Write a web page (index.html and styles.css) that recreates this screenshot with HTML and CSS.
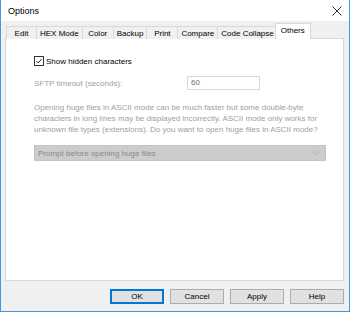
FILE: index.html
```html
<!DOCTYPE html>
<html>
<head>
<meta charset="utf-8">
<link rel="stylesheet" href="styles.css">
</head>
<body>
<div class="window">
  <div class="titlebar">
    <span class="title">Options</span>
    <svg class="close" width="10" height="10" viewBox="0 0 10 10"><path d="M0.5 0.5 L9.5 9.5 M9.5 0.5 L0.5 9.5" stroke="#333" stroke-width="1" fill="none"/></svg>
  </div>
  <div class="content">
    <div class="tabs">
      <div class="tab">Edit</div>
      <div class="tab">HEX Mode</div>
      <div class="tab">Color</div>
      <div class="tab">Backup</div>
      <div class="tab">Print</div>
      <div class="tab">Compare</div>
      <div class="tab">Code Collapse</div>
      <div class="tab active">Others</div>
    </div>
    <div class="panel">
      <label class="check-row">
        <span class="checkbox"><svg width="10" height="10" viewBox="0 0 10 10"><path d="M1.8 5.2 L4 7.4 L8.4 2.4" stroke="#222" stroke-width="1.2" fill="none"/></svg></span>
        <span>Show hidden characters</span>
      </label>
      <div class="field-row">
        <span class="disabled">SFTP timeout (seconds):</span>
        <span class="input">60</span>
      </div>
      <p class="note">Opening huge files in ASCII mode can be much faster but some double-byte characters in long lines may be displayed incorrectly. ASCII mode only works for unknown file types (extensions). Do you want to open huge files in ASCII mode?</p>
      <div class="select">
        <span>Prompt before opening huge files</span>
        <svg width="8" height="5" viewBox="0 0 8 5"><path d="M0.5 0.5 L4 4 L7.5 0.5" stroke="#b0b0b0" stroke-width="1" fill="none"/></svg>
      </div>
    </div>
    <div class="buttons">
      <button class="btn default">OK</button>
      <button class="btn">Cancel</button>
      <button class="btn">Apply</button>
      <button class="btn">Help</button>
    </div>
  </div>
</div>
</body>
</html>
```
FILE: styles.css
```css
html, body {
  margin: 0;
  padding: 0;
}
body {
  width: 350px;
  height: 312px;
  font-family: "Liberation Sans", Arial, sans-serif;
  font-size: 8px;
  color: #000;
}
.window {
  box-sizing: border-box;
  width: 350px;
  height: 312px;
  border: 1px solid #3f9ae6;
  border-top: none;
  background: #f0f0f0;
  display: flex;
  flex-direction: column;
}
.titlebar {
  height: 21px;
  background: #fff;
  display: flex;
  align-items: center;
  justify-content: space-between;
  padding: 0 7px 0 7px;
  flex: none;
}
.title {
  font-size: 9px;
  color: #000;
}
.close {
  display: block;
}
.content {
  flex: 1;
  display: flex;
  flex-direction: column;
  padding: 0 5px 0 4px;
}
.tabs {
  display: flex;
  height: 18px;
  align-items: flex-end;
  padding-left: 1px;
  margin-bottom: -1px;
  position: relative;
  z-index: 1;
}
.tab {
  box-sizing: border-box;
  min-width: 31px;
  height: 13px;
  line-height: 13px;
  padding: 0 3px;
  text-align: center;
  border: 1px solid #d9d9d9;
  border-bottom: none;
  border-left: none;
  background: #f0f0f0;
  color: #000;
}
.tab:first-child {
  border-left: 1px solid #d9d9d9;
}
.tab.active {
  height: 16px;
  line-height: 14px;
  background: #fff;
  margin-left: -3px;
  min-width: 35px;
  border-left: 1px solid #d9d9d9;
  padding: 0 5px;
}
.panel {
  height: 243px;
  box-sizing: border-box;
  background: #fff;
  border: 1px solid #d9d9d9;
  padding: 16px 17px 0 28px;
}
.check-row {
  display: flex;
  align-items: center;
  gap: 2px;
  height: 12px;
}
.checkbox {
  box-sizing: border-box;
  width: 10px;
  height: 10px;
  border: 1px solid #333;
  background: #fff;
  display: flex;
  align-items: center;
  justify-content: center;
}
.checkbox svg {
  display: block;
}
.disabled {
  color: #a0a0a0;
}
.field-row {
  display: flex;
  align-items: center;
  margin-top: 9px;
  height: 14px;
}
.field-row .disabled {
  width: 153px;
}
.input {
  box-sizing: border-box;
  width: 73px;
  height: 14px;
  border: 1px solid #d9d9d9;
  background: #fff;
  color: #6d6d6d;
  padding-left: 3px;
  line-height: 12px;
}
.note {
  margin: 12px 0 0 0;
  color: #a0a0a0;
  line-height: 11px;
}
.select {
  box-sizing: border-box;
  margin-top: 10px;
  height: 16px;
  background: #cccccc;
  border: 1px solid #c4c4c4;
  display: flex;
  align-items: center;
  justify-content: space-between;
  padding: 0 5px 0 3px;
  color: #8a8a8a;
}
.select svg {
  display: block;
}
.buttons {
  display: flex;
  justify-content: flex-end;
  gap: 6px;
  margin-top: 8px;
}
.btn {
  box-sizing: border-box;
  width: 54px;
  height: 15px;
  margin: 0;
  padding: 0;
  font-family: "Liberation Sans", Arial, sans-serif;
  font-size: 8px;
  color: #000;
  background: #e1e1e1;
  border: 1px solid #adadad;
  border-radius: 0;
}
.btn.default {
  border: 1px solid #0078d7;
  box-shadow: inset 0 0 0 1px #0078d7;
}
```
